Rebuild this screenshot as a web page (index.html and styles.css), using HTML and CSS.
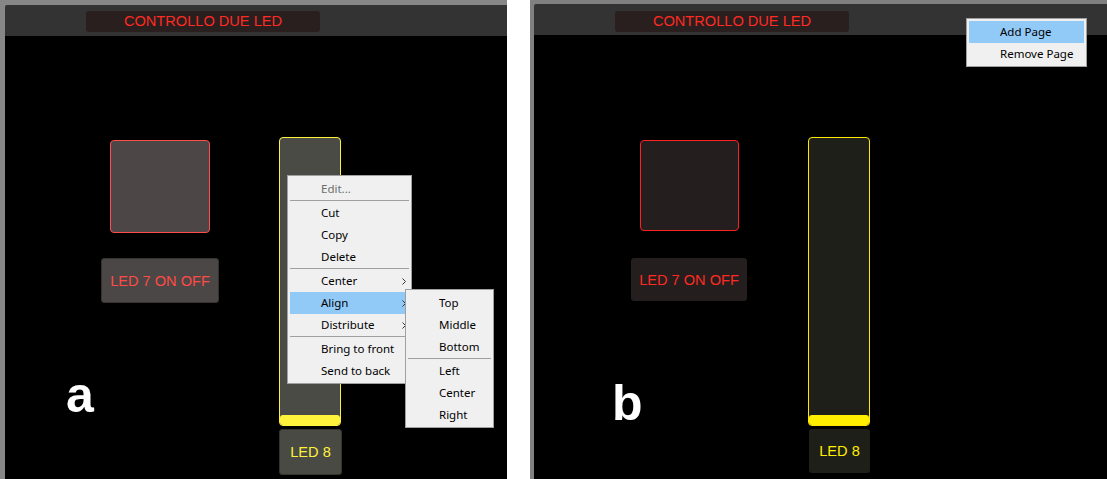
FILE: index.html
```html
<!DOCTYPE html>
<html>
<head>
<meta charset="utf-8">
<link rel="stylesheet" href="styles.css">
</head>
<body>
<div class="page">
  <section class="panel panel-a">
    <header class="hdr"><div class="title">CONTROLLO DUE LED</div></header>
    <div class="canvas">
      <div class="w sq sq-a"></div>
      <div class="w lbl lbl7-a">LED 7 ON OFF</div>
      <div class="w slider slider-a"><div class="bar"></div></div>
      <div class="w lbl lbl8-a">LED 8</div>
      <div class="w tag tag-a">a</div>
    </div>
    <div class="menu menu-main">
      <div class="mi disabled">Edit...</div>
      <div class="sep"></div>
      <div class="mi">Cut</div>
      <div class="mi">Copy</div>
      <div class="mi">Delete</div>
      <div class="sep"></div>
      <div class="mi sub">Center<svg class="chev" width="4" height="7" viewBox="0 0 4 7"><polyline points="0.5,0.5 3.5,3.5 0.5,6.5" fill="none" stroke="#333" stroke-width="1"/></svg></div>
      <div class="mi sub hl">Align<svg class="chev" width="4" height="7" viewBox="0 0 4 7"><polyline points="0.5,0.5 3.5,3.5 0.5,6.5" fill="none" stroke="#333" stroke-width="1"/></svg></div>
      <div class="mi sub">Distribute<svg class="chev" width="4" height="7" viewBox="0 0 4 7"><polyline points="0.5,0.5 3.5,3.5 0.5,6.5" fill="none" stroke="#333" stroke-width="1"/></svg></div>
      <div class="sep"></div>
      <div class="mi">Bring to front</div>
      <div class="mi">Send to back</div>
    </div>
    <div class="menu menu-sub">
      <div class="mi">Top</div>
      <div class="mi">Middle</div>
      <div class="mi">Bottom</div>
      <div class="sep"></div>
      <div class="mi">Left</div>
      <div class="mi">Center</div>
      <div class="mi">Right</div>
    </div>
  </section>
  <div class="gap"></div>
  <section class="panel panel-b">
    <header class="hdr"><div class="title">CONTROLLO DUE LED</div></header>
    <div class="canvas">
      <div class="w sq sq-b"></div>
      <div class="w lbl lbl7-b">LED 7 ON OFF</div>
      <div class="w slider slider-b"><div class="bar"></div></div>
      <div class="w lbl lbl8-b">LED 8</div>
      <div class="w tag tag-b">b</div>
    </div>
    <div class="menu menu-page">
      <div class="mi hl">Add Page</div>
      <div class="mi">Remove Page</div>
    </div>
  </section>
</div>
</body>
</html>
```

FILE: styles.css
```css
* { box-sizing: border-box; }
html, body { margin: 0; padding: 0; background: #fff; }
.page {
  display: flex;
  width: 1107px;
  height: 479px;
  overflow: hidden;
}
.panel {
  position: relative;
  display: flex;
  flex-direction: column;
}
.panel-a {
  width: 507px;
  background: #878787;
  padding: 5px 0 0 5px;
}
.gap { width: 23px; background: #fff; }
.panel-b {
  flex: 1;
  background: #808080;
  padding: 4px 0 0 4px;
}
.hdr {
  height: 31px;
  background: #333333;
  border-top-left-radius: 2px;
  padding: 6px 0 0 81px;
}
.panel-b .hdr { padding-top: 7px; height: 31px; }
.title {
  width: 234px;
  height: 21px;
  background: #2a1f1f;
  border-radius: 3px;
  color: #ff2a22;
  font-family: "Liberation Sans", Arial, sans-serif;
  font-size: 14.6px;
  line-height: 21px;
  text-align: center;
}
.canvas {
  flex: 1;
  position: relative;
  background: #000;
}
.w { position: absolute; }
.sq { border: 1px solid; border-radius: 4px; }
.sq-a { left: 105px; top: 104px; width: 100px; height: 93px; background: #4c4646; border-color: #ff4c4c; }
.sq-b { left: 106px; top: 105px; width: 99px; height: 91px; background: #241e1e; border-color: #ff2020; }
.lbl {
  display: flex;
  align-items: center;
  justify-content: center;
  font-family: "Liberation Sans", Arial, sans-serif;
  font-size: 14.6px;
  border-radius: 3px;
}
.lbl7-a { left: 96px; top: 222px; width: 118px; height: 45px; background: #4b4747; border: 1px solid #363232; color: #ff4a45; }
.lbl8-a { left: 274px; top: 393px; width: 63px; height: 46px; background: #4a4a44; border: 1px solid #34342f; color: #fff23c; }
.lbl7-b { left: 97px; top: 223px; width: 116px; height: 43px; background: #241e1e; color: #ff2a22; }
.lbl8-b { left: 275px; top: 394px; width: 61px; height: 44px; background: #1f1f1a; color: #ffee00; }
.slider {
  display: flex;
  flex-direction: column;
  justify-content: flex-end;
  width: 62px;
  height: 289px;
  border: 1px solid;
  border-radius: 4px;
}
.slider .bar { height: 10px; border-radius: 3px 3px 3px 3px; }
.slider-a { left: 274px; top: 101px; background: #4b4b45; border-color: #fff23c; }
.slider-a .bar { background: #fff23c; }
.slider-b { left: 274px; top: 102px; background: #1f1f1a; border-color: #ffe800; }
.slider-b .bar { background: #ffee00; }
.tag {
  color: #fff;
  font-family: "Liberation Sans", Arial, sans-serif;
  font-weight: bold;
  font-size: 50px;
  line-height: 50px;
}
.tag-a { left: 61px; top: 334px; }
.tag-b { left: 78px; top: 343px; }

.menu {
  position: absolute;
  background: #f0f0f0;
  border: 1px solid #a0a0a0;
  padding: 2px 2px 1px 2px;
  font-family: "Noto Sans", "Segoe UI", sans-serif;
  font-size: 11.5px;
  color: #000;
}
.menu-main { left: 287px; top: 175px; width: 125px; }
.menu-sub { left: 405px; top: 289px; width: 89px; }
.menu-page { left: 436px; top: 18px; width: 121px; }
.mi {
  position: relative;
  height: 22px;
  line-height: 22px;
  padding-left: 31px;
  white-space: nowrap;
}
.mi.disabled { color: #6d6d6d; }
.mi.hl { background: #91c9f7; }
.sep { height: 2px; border-top: 1px solid #a0a0a0; }
.chev { position: absolute; right: 3px; top: 8px; }
```
